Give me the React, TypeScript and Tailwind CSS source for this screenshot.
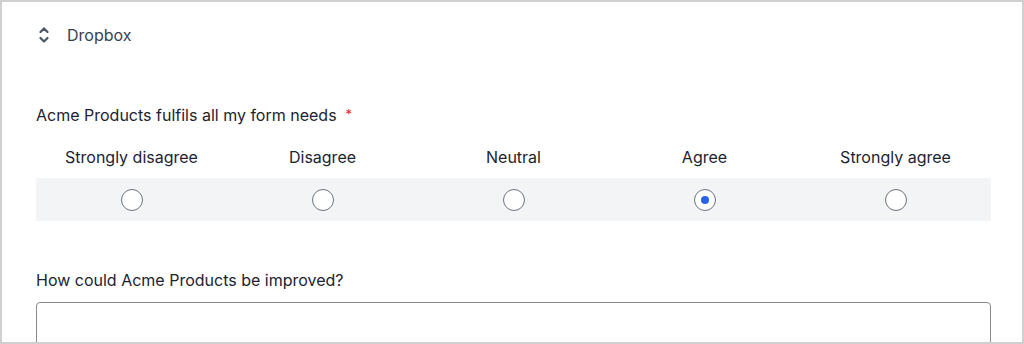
import { useState } from "react";

const options = ["Strongly disagree", "Disagree", "Neutral", "Agree", "Strongly agree"];

function SortIcon() {
  return (
    <svg width="12" height="18" viewBox="0 0 12 18" fill="none" stroke="#4b5563" strokeWidth="2.2" strokeLinecap="round" strokeLinejoin="round">
      <path d="M2.5 6 L6 2.5 L9.5 6" />
      <path d="M2.5 12 L6 15.5 L9.5 12" />
    </svg>
  );
}

export default function App() {
  const [value, setValue] = useState("Agree");

  return (
    <div
      className="w-[1024px] h-[344px] overflow-hidden bg-white border-2 border-[#d0d0d0] text-[#1c2331]"
      style={{ fontFamily: "Inter, 'Noto Sans', sans-serif" }}
    >
      <div className="pl-[34px] pr-[31px]">
        {/* Ranking item */}
        <div className="flex items-center h-[40px] mt-[13px] gap-[17px] pl-[2px]">
          <SortIcon />
          <span className="text-[16px] text-[#374151]">Dropbox</span>
        </div>

        {/* Likert question */}
        <div className="mt-[49px] flex items-center h-[22px] text-[16px]">
          <span>Acme Products fulfils all my form needs</span>
          <span className="ml-[9px] text-[#dc2626] text-[13px]">*</span>
        </div>

        <div className="mt-[19px]">
          <div className="grid grid-cols-5 h-[22px] items-center">
            {options.map((o) => (
              <div key={o} className="text-center text-[16px]">
                {o}
              </div>
            ))}
          </div>
          <div className="grid grid-cols-5 h-[43px] items-center bg-[#f3f4f6] mt-[11px]">
            {options.map((o) => (
              <div key={o} className="flex justify-center">
                <button
                  onClick={() => setValue(o)}
                  className="w-[22px] h-[22px] rounded-full border-[1.5px] border-[#6b7280] bg-white flex items-center justify-center"
                >
                  {value === o && <span className="w-[8px] h-[8px] rounded-full bg-[#2563eb]" />}
                </button>
              </div>
            ))}
          </div>
        </div>

        {/* Text question */}
        <div className="mt-[48px] h-[22px] flex items-center text-[16px]">
          How could Acme Products be improved?
        </div>
        <textarea className="mt-[11px] w-full h-[80px] border border-[#8a8a8a] rounded-[4px] resize-none block" />
      </div>
    </div>
  );
}
